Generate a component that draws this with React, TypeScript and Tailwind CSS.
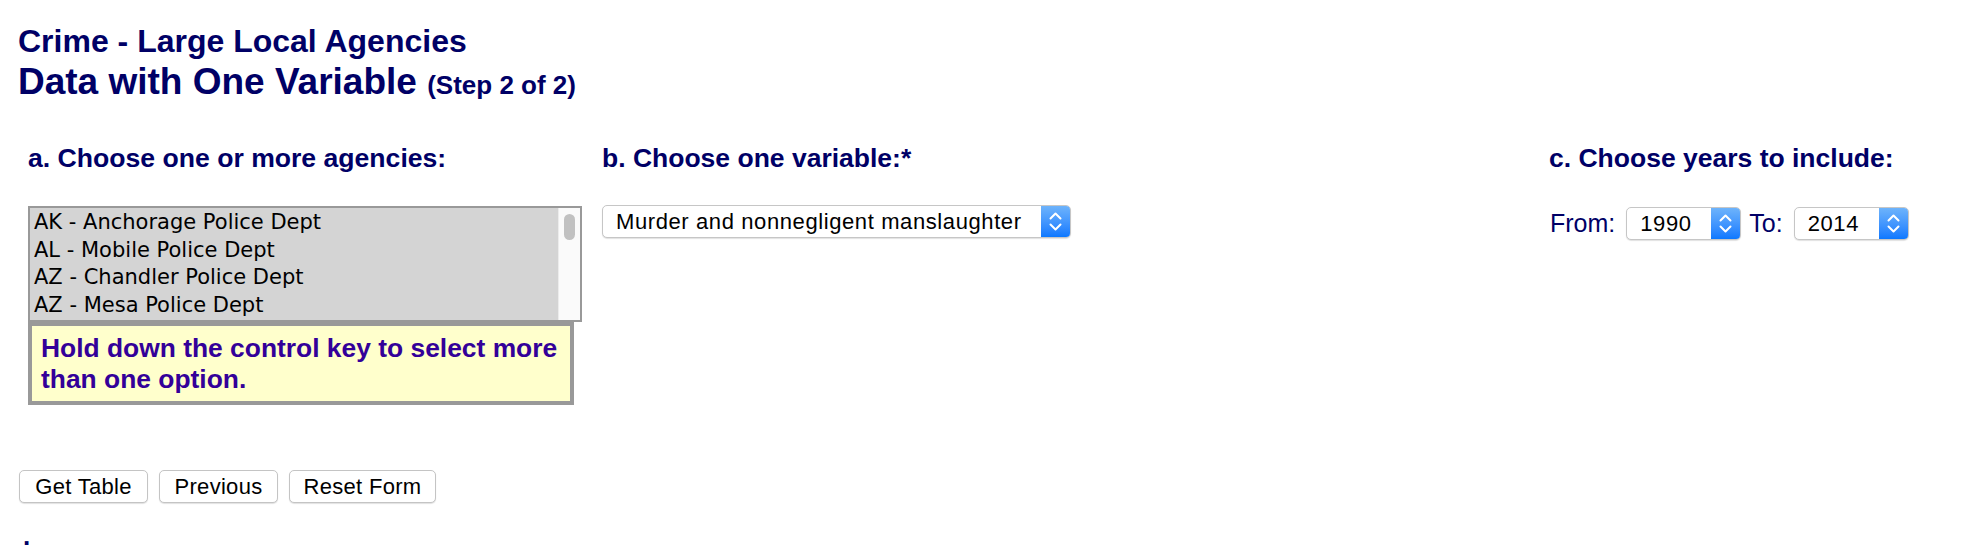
import React from 'react';

const agencies = [
  'AK - Anchorage Police Dept',
  'AL - Mobile Police Dept',
  'AZ - Chandler Police Dept',
  'AZ - Mesa Police Dept',
];

const Chevrons: React.FC = () => (
  <svg width="29" height="31" viewBox="0 0 29 31" fill="none">
    <path d="M9.5 12.5 L14.5 7.5 L19.5 12.5" stroke="white" strokeWidth="2" strokeLinecap="round" strokeLinejoin="round" />
    <path d="M9.5 18.5 L14.5 23.5 L19.5 18.5" stroke="white" strokeWidth="2" strokeLinecap="round" strokeLinejoin="round" />
  </svg>
);

const FakeSelect: React.FC<{ value: string; className: string }> = ({ value, className }) => (
  <div className={`h-[33px] flex rounded-[5px] border border-[#c6c6c6] bg-white shadow-[0_1px_1px_rgba(0,0,0,0.12)] overflow-hidden ${className}`}>
    <div className="flex-1 flex items-center pl-[13px] text-[22px] tracking-[0.6px] text-black whitespace-nowrap">
      {value}
    </div>
    <div className="w-[29px] bg-linear-to-b from-[#6db3fb] to-[#0a78ff] flex items-center justify-center">
      <Chevrons />
    </div>
  </div>
);

const Button: React.FC<{ label: string; className: string }> = ({ label, className }) => (
  <button className={`h-[33px] flex items-center justify-center rounded-[5px] border border-[#c4c4c4] bg-white shadow-[0_1px_1px_rgba(0,0,0,0.12)] text-[22px] tracking-[0.3px] text-black ${className}`}>
    {label}
  </button>
);

const App: React.FC = () => {
  return (
    <div className="w-[1968px] h-[546px] bg-white overflow-hidden font-['Liberation_Sans',Arial,sans-serif]">
      {/* Title */}
      <div className="pl-[18px] pt-[21px] text-[#000066] font-bold">
        <div className="text-[32px] leading-[40px]">Crime - Large Local Agencies</div>
        <div className="text-[37px] leading-[42px] whitespace-nowrap">
          Data with One Variable <span className="text-[26px] leading-none">(Step 2 of 2)</span>
        </div>
      </div>

      {/* Form columns */}
      <div className="flex items-start pl-[28px] mt-[40px]">
        <div className="w-[574px]">
          <h3 className="text-[26.6px] leading-[30px] font-bold text-[#000066]">a. Choose one or more agencies:</h3>
          <div className="mt-[33px] w-[554px] h-[116px] border-2 border-[#999] bg-[#d4d4d4] flex">
            <div className="flex-1 pl-[4px] pt-[1px] font-['DejaVu_Sans',sans-serif] text-[21px] leading-[27.7px] text-black">
              {agencies.map((a) => (
                <div key={a} className="whitespace-nowrap">{a}</div>
              ))}
            </div>
            <div className="w-[22px] bg-[#fafafa] border-l border-[#ececec] flex justify-center">
              <div className="mt-[6px] w-[11px] h-[26px] rounded-full bg-[#c1c1c1]" />
            </div>
          </div>
          <div className="w-[546px] border-4 border-[#999] bg-[#ffffcc] pl-[9px] pr-[4px] py-[7px] text-[26.4px] leading-[30.5px] font-bold text-[#330099] whitespace-nowrap">
            Hold down the control key to select more
            <br />
            than one option.
          </div>
        </div>

        <div className="w-[947px]">
          <h3 className="text-[26.5px] leading-[30px] font-bold text-[#000066]">b. Choose one variable:*</h3>
          <FakeSelect value="Murder and nonnegligent manslaughter" className="mt-[32px] w-[469px]" />
        </div>

        <div>
          <h3 className="text-[26.5px] leading-[30px] font-bold text-[#000066] whitespace-nowrap">c. Choose years to include:</h3>
          <div className="mt-[32px] flex items-center text-[25px] text-[#000066]">
            <span className="ml-[1px]">From:</span>
            <FakeSelect value="1990" className="ml-[11px] w-[115px]" />
            <span className="ml-[8px]">To:</span>
            <FakeSelect value="2014" className="ml-[11px] w-[115px]" />
          </div>
        </div>
      </div>

      {/* Buttons */}
      <div className="flex gap-[11px] pl-[19px] mt-[65px]">
        <Button label="Get Table" className="w-[129px]" />
        <Button label="Previous" className="w-[119px]" />
        <Button label="Reset Form" className="w-[147px]" />
      </div>

      <div className="pl-[23px] mt-[25px] text-[26px] leading-[16px] font-bold text-[#000066]">.</div>
    </div>
  );
};

export default App;
